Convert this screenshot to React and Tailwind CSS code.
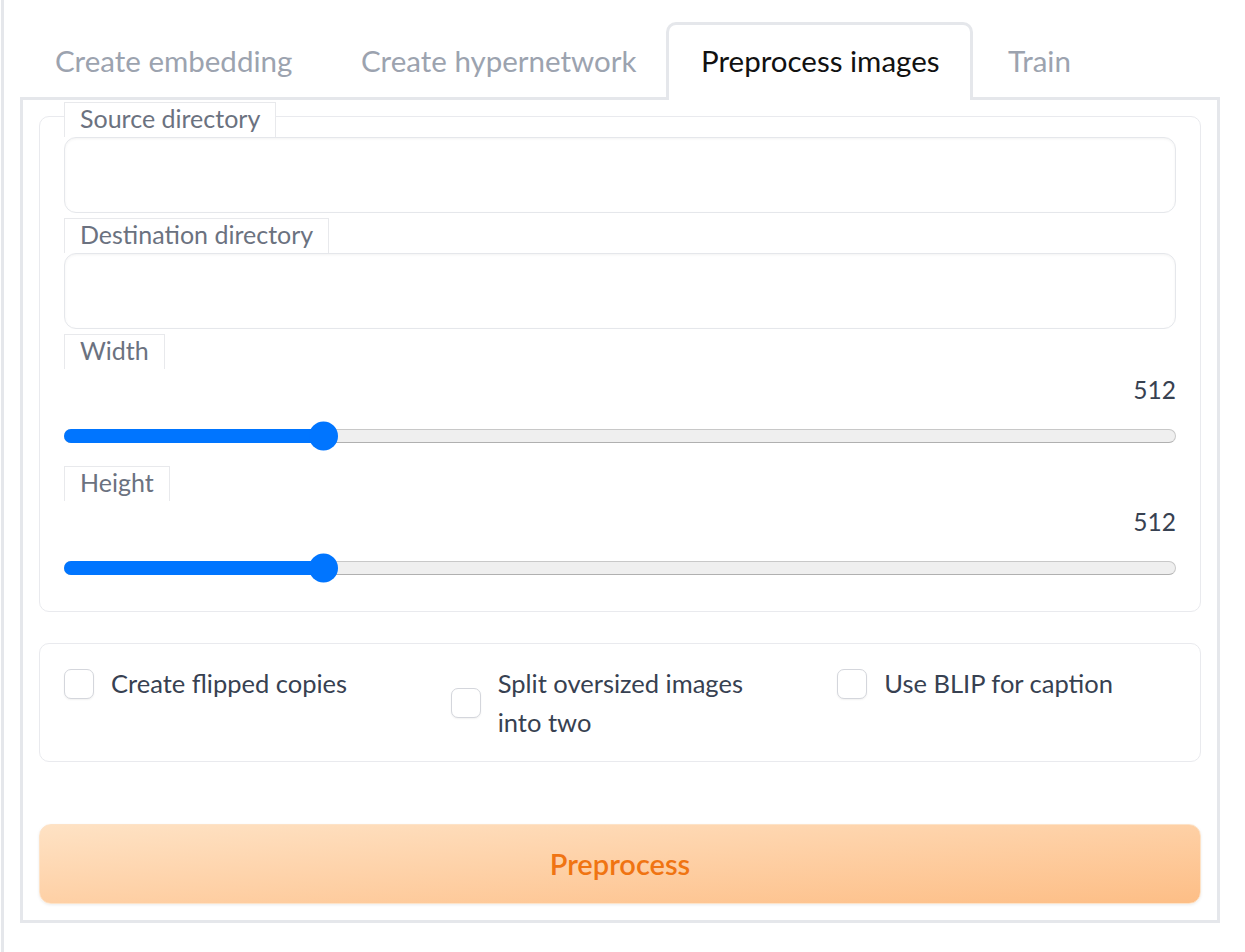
import React from 'react';

const tabs = [
  { name: 'Create embedding', w: 'w-[306px]' },
  { name: 'Create hypernetwork', w: 'w-[340px]' },
  { name: 'Preprocess images', w: 'w-[307px]', active: true },
  { name: 'Train', w: '' },
];

function FieldLabel({ children, first }) {
  return (
    <div
      className={`relative self-start h-[35px] px-[15px] pb-[3px] flex items-center bg-white border-x border-t border-[#e8e9ec] text-[25px] text-[#6b7280] ${first ? '-mt-[15px]' : ''}`}
    >
      {children}
    </div>
  );
}

function TextField({ label, first }) {
  return (
    <div className="flex flex-col">
      <FieldLabel first={first}>{label}</FieldLabel>
      <div className="h-[76px] rounded-[12px] border border-[#e5e7eb] bg-white shadow-[inset_0_1px_3px_rgba(0,0,0,0.05)]" />
    </div>
  );
}

function SliderField({ label, value }) {
  return (
    <div className="flex flex-col">
      <FieldLabel>{label}</FieldLabel>
      <div className="h-[42px] flex items-center justify-end text-[24.5px] text-[#374151]">{value}</div>
      <div className="h-[50px] flex items-center">
        <div className="relative w-full h-[14px] rounded-full bg-[#efefef] border border-[#c8c8c8] border-b-[#b0b0b0]">
          <div className="absolute -left-px -top-px h-[14px] w-[260px] rounded-full bg-[#0075ff]" />
          <div className="absolute left-[244px] top-1/2 -translate-y-1/2 w-[29px] h-[29px] rounded-full bg-[#0075ff]" />
        </div>
      </div>
    </div>
  );
}

function Check({ children }) {
  return (
    <div className="flex items-center gap-[17px]">
      <div className="w-[30px] h-[30px] shrink-0 rounded-[7px] border border-[#d4d6dc] bg-white shadow-[0_1px_2px_rgba(0,0,0,0.06)]" />
      <div className="text-[25.5px] leading-[39px] text-[#374151] whitespace-nowrap">{children}</div>
    </div>
  );
}

export default function App() {
  return (
    <div className="min-h-screen bg-white font-['Lato','Noto_Sans',sans-serif]">
      <div className="ml-[1px] border-l-[3px] border-[#e5e7eb] pl-[16px] pr-[25px] pt-[22px] pb-[29px]">
        {/* tab header */}
        <div className="flex items-end">
          {tabs.map((t) =>
            <div
              key={t.name}
              className={`${t.w} px-[32px] flex items-center border-[3px] border-b-0 rounded-t-[10px] text-[29.5px] whitespace-nowrap ${
                t.active
                  ? 'h-[78px] pb-[3px] relative z-10 -mb-[3px] bg-white border-[#e5e7eb] text-[#111111]'
                  : 'h-[75px] border-transparent text-[#9ca3af]'
              }`}
            >
              {t.name}
            </div>
          )}
        </div>

        {/* tab panel */}
        <div className="border-[3px] border-[#e5e7eb] p-[16px] flex flex-col">
          <div className="border border-[#e9eaee] rounded-[10px] px-[24px] pb-[18px] flex flex-col gap-[5px]">
            <TextField label="Source directory" first />
            <TextField label="Destination directory" />
            <SliderField label="Width" value="512" />
            <SliderField label="Height" value="512" />
          </div>

          <div className="mt-[31px] border border-[#e9eaee] rounded-[10px] px-[24px] pt-[20px] pb-[19px] grid grid-cols-3 gap-x-[48px] items-start">
            <Check>Create flipped copies</Check>
            <Check>Split oversized images<br />into two</Check>
            <Check>Use BLIP for caption</Check>
          </div>

          <button className="mt-[62px] h-[80px] rounded-[12px] border border-[#fde3c8] bg-linear-to-br from-[#fee2c4] to-[#fdbe86] shadow-[0_1px_3px_rgba(0,0,0,0.08)] flex items-center justify-center text-[29px] font-semibold text-[#f07412]">
            Preprocess
          </button>
        </div>
      </div>
    </div>
  );
}
